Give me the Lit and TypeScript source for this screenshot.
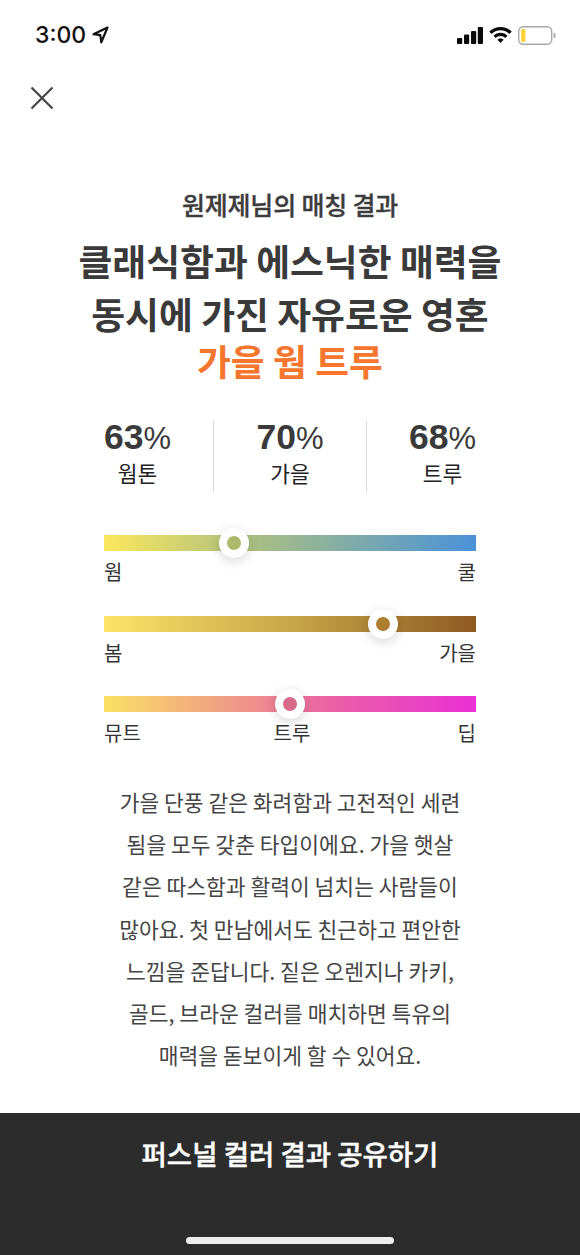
import { LitElement, html, css, unsafeCSS } from "lit";
import { customElement } from "lit/decorators.js";

const KR = `"Noto Sans CJK KR", "Liberation Sans", sans-serif`;

const stats = [
  { n: "63", l: "웜톤" },
  { n: "70", l: "가을" },
  { n: "68", l: "트루" },
];

const bars = [
  { cls: "g1", pos: 35, dot: "#adb96c", labels: ["웜", "쿨"] },
  { cls: "g2", pos: 75, dot: "#ac7d2f", labels: ["봄", "가을"] },
  { cls: "g3", pos: 50, dot: "#d76b88", labels: ["뮤트", "트루", "딥"] },
];

const body = [
  "가을 단풍 같은 화려함과 고전적인 세련",
  "됨을 모두 갖춘 타입이에요. 가을 햇살",
  "같은 따스함과 활력이 넘치는 사람들이",
  "많아요. 첫 만남에서도 친근하고 편안한",
  "느낌을 준답니다. 짙은 오렌지나 카키,",
  "골드, 브라운 컬러를 매치하면 특유의",
  "매력을 돋보이게 할 수 있어요.",
];

@customElement("app-root")
export class AppRoot extends LitElement {
  static styles = css`
    :host {
      display: block;
      width: 580px;
      height: 1255px;
      background: #fff;
      overflow: hidden;
      font-family: ${unsafeCSS(KR)};
      color: #333;
    }
    .page { display: flex; flex-direction: column; height: 1255px; }
    .status {
      height: 68px; flex: none; display: flex; justify-content: space-between;
      align-items: center; padding: 2px 24px 0 35px; box-sizing: border-box;
    }
    .time { display: flex; align-items: center; gap: 6px; font: 500 23px/1 "Inter", "Liberation Sans", sans-serif; color: #111; }
    .sys { display: flex; align-items: center; gap: 6px; }
    .sys svg, .time svg { display: block; }
    .close { height: 21px; padding: 18px 0 0 30px; flex: none; }
    .close svg { display: block; }
    .main { flex: 1; display: flex; flex-direction: column; align-items: center; padding-top: 79px; }
    .sub { font-size: 25px; line-height: 36px; font-weight: 500; color: #3c3c3c; letter-spacing: -0.2px; -webkit-text-stroke: 0.35px #3c3c3c; }
    h1 { margin: 12px 0 0; font-size: 36.8px; line-height: 53px; font-weight: 700; text-align: center; color: #3a3a3a; }
    h1 .hl { display: block; color: #f4762f; line-height: 41px; }
    .stats { width: 372px; display: grid; grid-template-columns: 109px 153px 110px; margin-top: 40px; height: 71px; }
    .stat { display: flex; flex-direction: column; align-items: center; border-left: 1px solid #d9d9d9; }
    .stat:first-child { border-left: 0; align-items: flex-start; }
    .stat:last-child { align-items: flex-end; }
    .stat .in { display: flex; flex-direction: column; align-items: center; }
    .num { font: 700 35.5px/32px "Liberation Sans", sans-serif; color: #3a3a3a; }
    .num span { font-weight: 400; font-size: 31px; }
    .lab { font-size: 21.5px; line-height: 28px; color: #222; margin-top: 4px; }
    .bars { width: 372px; margin-top: 43px; display: flex; flex-direction: column; gap: 29.5px; }
    .track { height: 16px; position: relative; }
    .g1 { background: linear-gradient(90deg, #fbe75c, #aabf82 40%, #4a92d9); }
    .g2 { background: linear-gradient(90deg, #fbe469, #c9a648 50%, #8f5a22); }
    .g3 { background: linear-gradient(90deg, #fae064, #ee8f8c 40%, #e95fa5 62%, #ea30d6); }
    .knob {
      position: absolute; top: 50%; width: 30px; height: 30px; border-radius: 50%;
      background: #fff; transform: translate(-50%, -50%);
      box-shadow: 0 3px 12px rgba(0,0,0,.16); display: flex; align-items: center; justify-content: center;
    }
    .knob i { display: block; width: 14px; height: 14px; border-radius: 50%; }
    .labels { display: flex; font-size: 20px; line-height: 28px; color: #333; margin-top: 7px; }
    .labels span { flex: 1; text-align: center; }
    .labels span:first-child { text-align: left; }
    .labels span:last-child { text-align: right; }
    .labels span:nth-child(2):not(:last-child) { padding-left: 4px; }
    .copy { margin-top: 34px; font-size: 21.5px; line-height: 42.2px; color: #444; text-align: center; }
    .cta {
      flex: none; height: 142px; background: #2c2c2c; color: #fff; position: relative;
      display: flex; justify-content: center; font-size: 27.5px; font-weight: 500; line-height: 80px;
      -webkit-text-stroke: 0.45px #fff;
    }
    .home { position: absolute; left: 186px; bottom: 11px; width: 208px; height: 7px; border-radius: 4px; background: #eee; }
  `;

  render() {
    return html`<div class="page">
      <div class="status">
        <div class="time">3:00
          <svg width="17" height="18" viewBox="0 0 17 18"><path d="M15.5 1.5 1.5 8.2l6.8.9 1 7.2z" fill="none" stroke="#111" stroke-width="2.2" stroke-linejoin="round"/></svg>
        </div>
        <div class="sys">
          <svg width="26" height="17" viewBox="0 0 26 17" fill="#0a0a0a">
            <rect x="0" y="11" width="5.2" height="6" rx="1"/><rect x="7" y="7.5" width="5.2" height="9.5" rx="1"/><rect x="14" y="4" width="5.2" height="13" rx="1"/><rect x="20.8" y="0" width="5.2" height="17" rx="1"/>
          </svg>
          <svg width="23" height="17" viewBox="0 0 23 17" fill="#0a0a0a">
            <path d="M11.5 0C7.2 0 3.2 1.7.3 4.6l2.2 2.3C4.8 4.6 8 3.2 11.5 3.2s6.7 1.4 9 3.7l2.2-2.3C19.8 1.7 15.8 0 11.5 0z"/>
            <path d="M11.5 5.8c-2.7 0-5.2 1.1-7 2.9l2.2 2.3c1.2-1.2 3-2 4.8-2s3.6.8 4.8 2l2.2-2.3c-1.8-1.8-4.3-2.9-7-2.9z"/>
            <path d="M11.5 11.4c-1.2 0-2.3.5-3.1 1.3l3.1 3.3 3.1-3.3c-.8-.8-1.9-1.3-3.1-1.3z"/>
          </svg>
          <svg width="38" height="19" viewBox="0 0 38 19">
            <rect x=".7" y=".7" width="33" height="17.6" rx="4.5" fill="#fff" stroke="#a8a8a8" stroke-width="1.4"/>
            <rect x="3" y="3" width="4.5" height="13" rx="1.5" fill="#fdd23c"/>
            <path d="M35.6 6.5c1.4.4 2 1.6 2 3s-.6 2.6-2 3z" fill="#a8a8a8"/>
          </svg>
        </div>
      </div>
      <div class="close">
        <svg width="24" height="24" viewBox="0 0 24 24"><path d="M1.5 1.5 22.5 22.5M22.5 1.5 1.5 22.5" stroke="#444" stroke-width="2.2" fill="none"/></svg>
      </div>
      <div class="main">
        <div class="sub">원제제님의 매칭 결과</div>
        <h1>클래식함과 에스닉한 매력을<br>동시에 가진 자유로운 영혼<span class="hl">가을 웜 트루</span></h1>
        <div class="stats">
          ${stats.map(s => html`<div class="stat"><div class="in"><div class="num">${s.n}<span>%</span></div><div class="lab">${s.l}</div></div></div>`)}
        </div>
        <div class="bars">
          ${bars.map(b => html`<div>
            <div class="track ${b.cls}">
              <div class="knob" style="left:${b.pos}%"><i style="background:${b.dot}"></i></div>
            </div>
            <div class="labels">${b.labels.map(l => html`<span>${l}</span>`)}</div>
          </div>`)}
        </div>
        <div class="copy">${body.map(l => html`<div>${l}</div>`)}</div>
      </div>
      <div class="cta">퍼스널 컬러 결과 공유하기<div class="home"></div></div>
    </div>`;
  }
}
